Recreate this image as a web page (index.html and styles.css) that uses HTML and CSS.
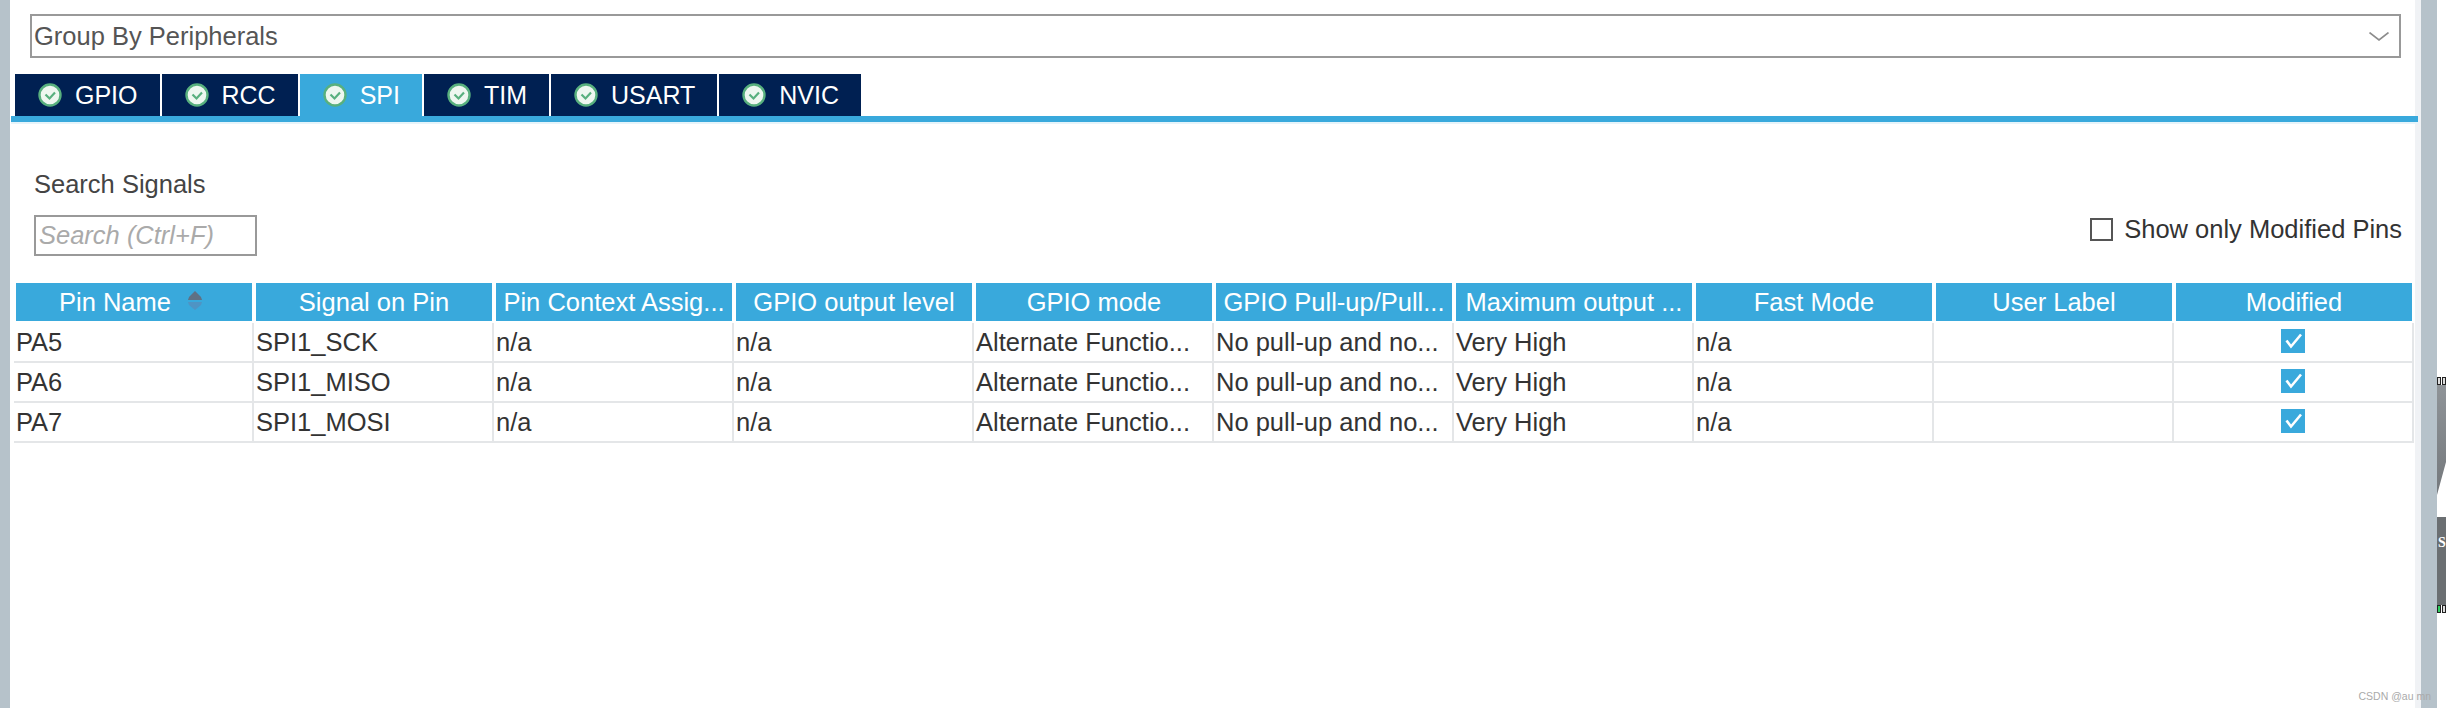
FILE: index.html
```html
<!DOCTYPE html>
<html lang="en">
<head>
    <meta charset="UTF-8">
    <title>Pinout Configuration</title>
    <link rel="stylesheet" href="styles.css">
</head>
<body>
    <div class="edge"></div>
    <main class="panel">
        <div class="group-select">
            <span>Group By Peripherals</span>
            <svg class="chevron" width="20" height="9" viewBox="0 0 20 9"><path d="M0.5 0.5 L10 8 L19.5 0.5" fill="none" stroke="#8c8c8c" stroke-width="1.6"/></svg>
        </div>

        <nav class="tabs">
            <a class="tab"><svg class="ok" viewBox="0 0 24 24"><circle cx="12" cy="12" r="10.5" fill="#eef7f0" stroke="#58b07e" stroke-width="2.4"/><path d="M7.5 11.5 L11.5 15.5 L17 9.5" fill="none" stroke="#58b07e" stroke-width="2.2"/></svg>GPIO</a>
            <a class="tab"><svg class="ok" viewBox="0 0 24 24"><circle cx="12" cy="12" r="10.5" fill="#eef7f0" stroke="#58b07e" stroke-width="2.4"/><path d="M7.5 11.5 L11.5 15.5 L17 9.5" fill="none" stroke="#58b07e" stroke-width="2.2"/></svg>RCC</a>
            <a class="tab active"><svg class="ok" viewBox="0 0 24 24"><circle cx="12" cy="12" r="10.5" fill="#eef7f0" stroke="#58b07e" stroke-width="2.4"/><path d="M7.5 11.5 L11.5 15.5 L17 9.5" fill="none" stroke="#58b07e" stroke-width="2.2"/></svg>SPI</a>
            <a class="tab"><svg class="ok" viewBox="0 0 24 24"><circle cx="12" cy="12" r="10.5" fill="#eef7f0" stroke="#58b07e" stroke-width="2.4"/><path d="M7.5 11.5 L11.5 15.5 L17 9.5" fill="none" stroke="#58b07e" stroke-width="2.2"/></svg>TIM</a>
            <a class="tab"><svg class="ok" viewBox="0 0 24 24"><circle cx="12" cy="12" r="10.5" fill="#eef7f0" stroke="#58b07e" stroke-width="2.4"/><path d="M7.5 11.5 L11.5 15.5 L17 9.5" fill="none" stroke="#58b07e" stroke-width="2.2"/></svg>USART</a>
            <a class="tab"><svg class="ok" viewBox="0 0 24 24"><circle cx="12" cy="12" r="10.5" fill="#eef7f0" stroke="#58b07e" stroke-width="2.4"/><path d="M7.5 11.5 L11.5 15.5 L17 9.5" fill="none" stroke="#58b07e" stroke-width="2.2"/></svg>NVIC</a>
        </nav>
        <div class="tab-bar"></div>

        <section class="toolbar">
            <div class="search">
                <label for="search-input">Search Signals</label>
                <input id="search-input" type="text" placeholder="Search (Ctrl+F)">
            </div>
            <div class="only-modified">
                <span class="box"></span>
                <span>Show only Modified Pins</span>
            </div>
        </section>

        <div class="pin-table">
            <div class="row head">
                <div class="th sorted">Pin Name
                    <svg class="sort" width="16" height="20" viewBox="0 0 16 20"><path d="M8 0 L14 6 L15 9 L1 9 L2 6 Z" fill="#5f7184"/><path d="M1 11 L15 11 L14 14 L8 19 L2 14 Z" fill="#4f94c4"/></svg>
                </div>
                <div class="th">Signal on Pin</div>
                <div class="th">Pin Context Assig...</div>
                <div class="th">GPIO output level</div>
                <div class="th">GPIO mode</div>
                <div class="th">GPIO Pull-up/Pull...</div>
                <div class="th">Maximum output ...</div>
                <div class="th">Fast Mode</div>
                <div class="th">User Label</div>
                <div class="th">Modified</div>
            </div>
            <div class="row">
                <div class="td">PA5</div>
                <div class="td">SPI1_SCK</div>
                <div class="td">n/a</div>
                <div class="td">n/a</div>
                <div class="td">Alternate Functio...</div>
                <div class="td">No pull-up and no...</div>
                <div class="td">Very High</div>
                <div class="td">n/a</div>
                <div class="td"></div>
                <div class="td check-cell"><svg class="check" viewBox="0 0 24 24"><rect width="24" height="24" fill="#39a9dc"/><path d="M5.5 11.5 L10 17.5 L20 5.5" fill="none" stroke="#fff" stroke-width="2.6"/></svg></div>
            </div>
            <div class="row">
                <div class="td">PA6</div>
                <div class="td">SPI1_MISO</div>
                <div class="td">n/a</div>
                <div class="td">n/a</div>
                <div class="td">Alternate Functio...</div>
                <div class="td">No pull-up and no...</div>
                <div class="td">Very High</div>
                <div class="td">n/a</div>
                <div class="td"></div>
                <div class="td check-cell"><svg class="check" viewBox="0 0 24 24"><rect width="24" height="24" fill="#39a9dc"/><path d="M5.5 11.5 L10 17.5 L20 5.5" fill="none" stroke="#fff" stroke-width="2.6"/></svg></div>
            </div>
            <div class="row">
                <div class="td">PA7</div>
                <div class="td">SPI1_MOSI</div>
                <div class="td">n/a</div>
                <div class="td">n/a</div>
                <div class="td">Alternate Functio...</div>
                <div class="td">No pull-up and no...</div>
                <div class="td">Very High</div>
                <div class="td">n/a</div>
                <div class="td"></div>
                <div class="td check-cell"><svg class="check" viewBox="0 0 24 24"><rect width="24" height="24" fill="#39a9dc"/><path d="M5.5 11.5 L10 17.5 L20 5.5" fill="none" stroke="#fff" stroke-width="2.6"/></svg></div>
            </div>
        </div>
    </main>
    <div class="scroll-strip"></div>
    <aside class="behind">
        <div class="pins"><i></i><i></i></div>
        <div class="chip-top"></div>
        <div class="chip-bottom">S</div>
        <div class="pins"><i class="green"></i><i></i></div>
    </aside>
    <span class="watermark">CSDN @au mn</span>
</body>
</html>
```

FILE: styles.css
```css
* {
    box-sizing: border-box;
}

html, body {
    height: 708px;
}

body {
    margin: 0;
    display: flex;
    overflow: hidden;
    position: relative;
    background-color: white;
    font-family: "Liberation Sans", Arial, sans-serif;
    font-size: 25.5px;
    color: #333;
}

.edge {
    width: 10px;
    flex: none;
    background-color: #b6c2ca;
}

.panel {
    width: 2411px;
    flex: none;
    padding-top: 14px;
    background-color: white;
    border-right: 6px solid #f0f2f5;
}

.group-select {
    display: flex;
    justify-content: space-between;
    align-items: center;
    width: 2371px;
    height: 44px;
    margin-left: 20px;
    padding: 0 10px 0 2px;
    border: 2px solid #999;
    color: #555;
}

.chevron {
    margin-top: 1px;
}

.tabs {
    display: flex;
    gap: 2px;
    height: 42px;
    margin: 16px 0 0 5px;
}

.tab {
    display: flex;
    align-items: center;
    gap: 13px;
    padding: 0 22px 0 23px;
    background-color: #002052;
    color: white;
    font-size: 25px;
}

.tab.active {
    background-color: #39a9dc;
}

.ok {
    width: 24px;
    height: 24px;
}

.tab-bar {
    height: 8px;
    margin: 0 -3px 0 1px;
    background-color: #39a9dc;
    border-bottom: 2px solid #e6f4fa;
}

.toolbar {
    display: flex;
    justify-content: space-between;
    align-items: flex-end;
    padding: 45px 13px 0 24px;
    margin-bottom: 27px;
}

.search {
    display: flex;
    flex-direction: column;
    align-items: flex-start;
    gap: 16px;
}

.search label {
    line-height: 30px;
    color: #444;
}

.search input {
    width: 223px;
    height: 41px;
    padding: 0 3px;
    border: 2px solid #999;
    border-radius: 0;
    outline: none;
    font: inherit;
}

.search input::placeholder {
    font-style: italic;
    color: #aaa;
    opacity: 1;
}

.only-modified {
    display: flex;
    align-items: center;
    gap: 11px;
    margin-bottom: 12px;
}

.box {
    width: 23px;
    height: 23px;
    border: 2px solid #555;
}

.pin-table {
    margin-left: 4px;
    width: 2400px;
}

.row {
    display: grid;
    grid-template-columns: repeat(10, 240px);
    height: 40px;
}

.th {
    display: flex;
    justify-content: center;
    align-items: center;
    height: 38px;
    margin: 0 2px;
    background-color: #39a9dc;
    color: white;
    white-space: nowrap;
}

.th.sorted {
    gap: 16px;
    padding-right: 6px;
}

.sort {
    margin-top: -2px;
}

.td {
    display: flex;
    align-items: center;
    padding-left: 2px;
    border-right: 2px solid #e4e6e8;
    border-bottom: 2px solid #e4e6e8;
    white-space: nowrap;
}

.check-cell {
    justify-content: center;
    padding: 0 0 2px 0;
}

.check {
    width: 24px;
    height: 24px;
}

.scroll-strip {
    width: 16px;
    flex: none;
    background-color: #b6c2ca;
}

.behind {
    flex: 1;
    display: flex;
    flex-direction: column;
    padding-top: 377px;
    overflow: hidden;
}

.pins {
    display: flex;
    height: 8px;
    gap: 1px;
}

.pins i {
    width: 4px;
    border: 1px solid #222;
    background-color: #ddd;
}

.pins i.green {
    background-color: #2fd060;
}

.chip-top {
    height: 110px;
    background: linear-gradient(#8f9498, #74787c);
    clip-path: polygon(0 0, 100% 0, 100% 70%, 0 100%);
}

.chip-bottom {
    height: 88px;
    margin-top: 22px;
    padding: 18px 0 0 1px;
    background-color: #6b6f72;
    color: white;
    font-family: "Liberation Serif", serif;
    font-weight: bold;
    font-size: 14px;
}

.watermark {
    position: absolute;
    right: 15px;
    bottom: 6px;
    font-size: 10.5px;
    color: #aaa;
}
```
